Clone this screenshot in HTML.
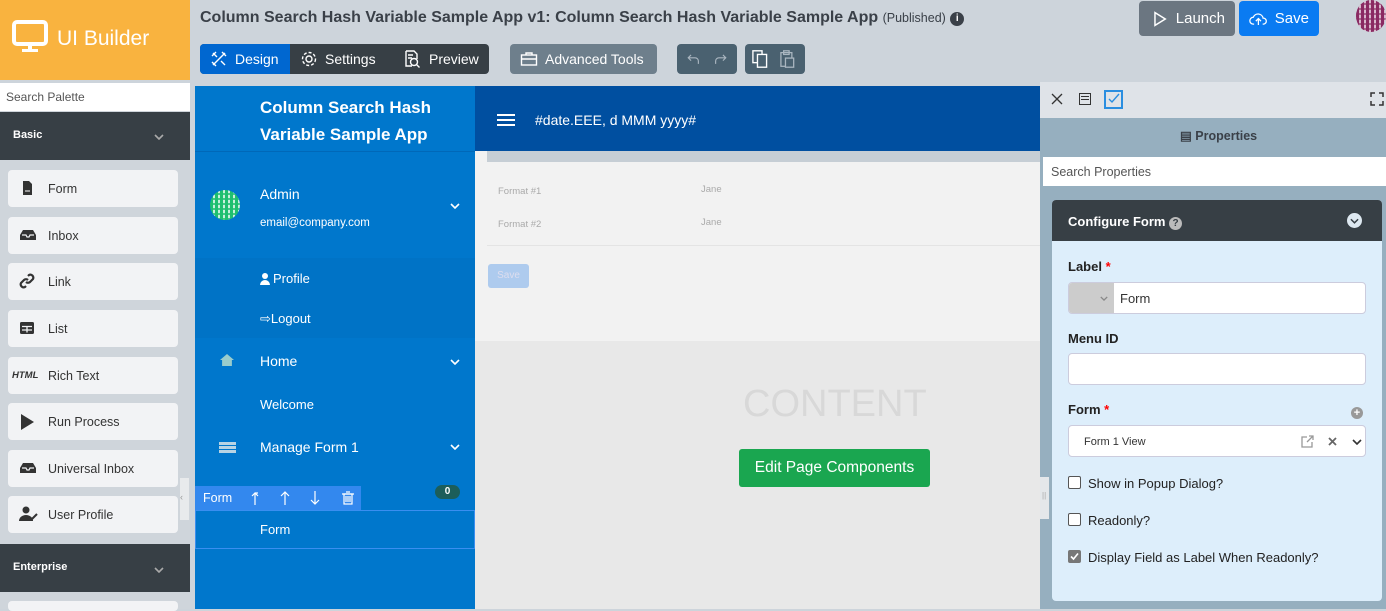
<!DOCTYPE html>
<html><head><meta charset="utf-8"><style>
*{box-sizing:border-box;margin:0;padding:0}
body{width:1386px;height:609px;overflow:hidden;background:#cdd4db;font-family:"Liberation Sans",sans-serif;position:relative;color:#333}
.abs{position:absolute}
svg{display:block}
.logo{left:0;top:0;width:190px;height:80px;background:#f9b33f;color:#fff;font-size:21px}
.title{left:200px;top:9px;font-size:16px;font-weight:bold;color:#3a4048}
.btn{position:absolute;height:30px;border-radius:4px;color:#fff;font-size:14px;display:flex;align-items:center;gap:7px;padding:0 10px}
.pal{left:0;top:83px;width:190px;height:526px;background:#cfd5db}
.search{left:0;top:83px;width:190px;height:28px;background:#fff;font-size:12px;color:#555;padding:7px 6px}
.sec{left:0;width:190px;height:48px;background:#373f45;color:#fff;font-size:11px;font-weight:bold;padding:17px 13px}
.item{position:absolute;left:8px;width:170px;height:37px;background:#f2f3f5;border-radius:4px;font-size:12.5px;color:#333;display:flex;align-items:center;padding-left:40px}
.item svg{position:absolute;left:11px;top:10px}
.side{left:195px;top:86px;width:280px;height:523px;background:#0077cc;color:#fff}
.hdr{left:475px;top:86px;width:565px;height:65px;background:#004fa0;color:#fff}
.content{left:475px;top:151px;width:565px;height:458px;background:#e8e8e8}
.menu{position:absolute;left:65px;font-size:14px}
.rp{left:1040px;top:82px;width:346px;height:527px;background:#96afbf}
.field{position:absolute;left:1068px;width:298px;height:32px;background:#fff;border:1px solid #ccd;border-radius:4px}
.lbl{position:absolute;left:1068px;font-size:13px;font-weight:bold;color:#222}
.cb{position:absolute;left:1068px;width:13px;height:13px;border:1px solid #555;border-radius:2px;background:#fff}
.cbt{position:absolute;left:1088px;font-size:13px;color:#222}
.chev{position:absolute}
</style></head><body>
<svg width="0" height="0" style="position:absolute"><defs><symbol id="chev" viewBox="0 0 10 6"><path d="M1 1l4 4 4-4" fill="none" stroke="currentColor" stroke-width="1.6"/></symbol></defs></svg>
<div class="abs logo"><svg class="abs" style="left:12px;top:20px" width="36" height="34" viewBox="0 0 36 34"><rect x="2" y="2" width="32" height="22" rx="3" fill="none" stroke="#fff" stroke-width="4"/><rect x="16" y="24" width="4" height="6" fill="#fff"/><rect x="10" y="29" width="16" height="3" fill="#fff"/></svg><span class="abs" style="left:57px;top:27px">UI Builder</span></div>
<div class="abs title">Column Search Hash Variable Sample App v1: Column Search Hash Variable Sample App <span style="font-weight:normal;font-size:12.5px">(Published)</span> <span style="display:inline-block;width:14px;height:14px;border-radius:50%;background:#3a4048;color:#fff;font-size:10px;text-align:center;line-height:14px;vertical-align:1px">i</span></div>
<div class="abs" style="left:200px;top:44px;width:289px;height:30px;background:#373f45;border-radius:4px"></div>
<div class="btn" style="left:200px;top:44px;width:90px;background:#0067d0;border-radius:4px 0 0 4px"><svg width="18" height="18" viewBox="0 0 18 18" fill="none" stroke="#fff" stroke-width="1.4"><path d="M3 15L15 3M12 2l4 4M2 12l4 4M3 3l4 4M11 11l4 4M2 6l4-4"/></svg>Design</div>
<div class="btn" style="left:290px;top:44px"><svg width="18" height="18" viewBox="0 0 18 18" fill="none" stroke="#fff" stroke-width="1.4"><circle cx="9" cy="9" r="3"/><circle cx="9" cy="9" r="6.5" stroke-dasharray="3 2"/></svg>Settings</div>
<div class="btn" style="left:392px;top:44px"><svg width="20" height="20" viewBox="0 0 20 20" fill="none" stroke="#fff" stroke-width="1.4"><path d="M4 2h8l3 3v5M4 2v15h6"/><circle cx="12" cy="13" r="3.5"/><path d="M14.5 15.5l3 3M6 6h5M6 9h4"/></svg>Preview</div>
<div class="btn" style="left:510px;top:44px;width:147px;background:#6e7f8c"><svg width="18" height="16" viewBox="0 0 18 16" fill="none" stroke="#fff" stroke-width="1.4"><rect x="1.5" y="4" width="15" height="10"/><path d="M6 4V2h6v2M1.5 8h15"/></svg>Advanced Tools</div>
<div class="btn" style="left:677px;top:44px;width:60px;background:#4a6170;gap:14px"><svg width="16" height="14" viewBox="0 0 16 14" fill="none" stroke="#aab6c0" stroke-width="1.4"><path d="M5 2L1.5 5.5 5 9M2 5.5h8a4 4 0 014 4V13"/></svg><svg width="16" height="14" viewBox="0 0 16 14" fill="none" stroke="#aab6c0" stroke-width="1.4"><path d="M11 2l3.5 3.5L11 9M14 5.5H6a4 4 0 00-4 4V13"/></svg></div>
<div class="btn" style="left:745px;top:44px;width:60px;background:#4a6170;gap:12px;padding-left:7px"><svg width="18" height="20" viewBox="0 0 18 20" fill="none" stroke="#fff" stroke-width="1.5"><rect x="1" y="1" width="10" height="13"/><rect x="6" y="5" width="10" height="14" fill="#4a6170"/></svg><svg width="16" height="20" viewBox="0 0 16 20" fill="none" stroke="#aab6c0" stroke-width="1.4"><rect x="1" y="3" width="12" height="15"/><rect x="4" y="1" width="6" height="4"/><rect x="6" y="9" width="9" height="10" fill="#4a6170"/></svg></div>
<div class="btn" style="left:1139px;top:1px;width:96px;height:35px;background:#6b7681;font-size:15px;gap:9px;padding-left:14px"><svg width="14" height="16" viewBox="0 0 14 16" fill="none" stroke="#fff" stroke-width="1.5"><path d="M2 1.5v13L12.5 8z"/></svg>Launch</div>
<div class="btn" style="left:1239px;top:1px;width:80px;height:35px;background:#0a7bf2;font-size:15px;gap:7px"><svg width="22" height="16" viewBox="0 0 22 16" fill="none" stroke="#fff" stroke-width="1.5"><path d="M6 14H5a4 4 0 010-8 6 6 0 0111.5 1A3.5 3.5 0 0117 14h-1M11 15V8M8 10.5l3-3 3 3"/></svg>Save</div>
<div class="abs" style="left:1356px;top:0;width:30px;height:32px;border-radius:50%;background:repeating-linear-gradient(90deg,#8a2a62 0 3px,#d8b8cc 3px 5px),#8a2a62;overflow:hidden"><div style="width:30px;height:32px;background:repeating-linear-gradient(#0000 0 3px,#8a2a6299 3px 5px)"></div></div>

<div class="abs pal"></div>
<div class="abs search">Search Palette</div>
<div class="abs sec" style="top:112px">Basic<svg class="chev" style="right:26px;top:22px;color:#aaa" width="10" height="6"><use href="#chev"/></svg></div>
<div class="item" style="top:170px"><svg width="16" height="16" viewBox="0 0 16 16"><path d="M4 1h6l3 3v11H4z" fill="#333"/><path d="M6 11h5" stroke="#fff"/></svg>Form</div>
<div class="item" style="top:217px"><svg width="18" height="16" viewBox="0 0 18 16"><path d="M1 8l3-5h10l3 5v5H1z" fill="#333"/><path d="M3 8h4l1 2h2l1-2h4" fill="none" stroke="#f2f3f5" stroke-width="1.2"/></svg>Inbox</div>
<div class="item" style="top:263px"><svg width="16" height="16" viewBox="0 0 16 16" fill="none" stroke="#333" stroke-width="2.2"><path d="M7 9a3 3 0 004 0l3-3a3 3 0 00-4-4L9 3M9 7a3 3 0 00-4 0L2 10a3 3 0 004 4l1-1"/></svg>Link</div>
<div class="item" style="top:310px"><svg width="16" height="16" viewBox="0 0 16 16"><rect x="1" y="2" width="14" height="12" rx="1.5" fill="#333"/><path d="M3 6.5h10M8 6.5v6M3 10h10" stroke="#f2f3f5" stroke-width="1.3"/></svg>List</div>
<div class="item" style="top:357px"><b class="abs" style="left:4px;top:13px;font-size:9.5px;font-style:italic">HTML</b>Rich Text</div>
<div class="item" style="top:403px"><svg width="16" height="18" viewBox="0 0 16 18"><path d="M2 1v16l13-8z" fill="#333"/></svg>Run Process</div>
<div class="item" style="top:450px"><svg width="18" height="16" viewBox="0 0 18 16"><path d="M1 8l3-5h10l3 5v5H1z" fill="#333"/><path d="M3 8h4l1 2h2l1-2h4" fill="none" stroke="#f2f3f5" stroke-width="1.2"/></svg>Universal Inbox</div>
<div class="item" style="top:496px"><svg width="20" height="16" viewBox="0 0 20 16"><circle cx="7" cy="4" r="3.5" fill="#333"/><path d="M0 15a7 6 0 0114 0z" fill="#333"/><path d="M12 14l6-6" stroke="#333" stroke-width="2"/></svg>User Profile</div>
<div class="abs sec" style="top:544px;height:48px">Enterprise<svg class="chev" style="right:26px;top:23px;color:#aaa" width="10" height="6"><use href="#chev"/></svg></div>
<div class="abs" style="left:8px;top:601px;width:170px;height:10px;background:#f2f3f5;border-radius:4px"></div>
<div class="abs" style="left:180px;top:478px;width:9px;height:42px;background:#e8eaec;font-size:9px;color:#999;padding-top:14px">‹</div>

<div class="abs side">
<div class="menu" style="top:8px;font-size:17px;font-weight:bold;line-height:27px">Column Search Hash<br>Variable Sample App</div>
<div class="abs" style="left:0;top:65px;width:280px;height:1px;background:#0068b8"></div>
<div class="abs" style="left:15px;top:104px;width:30px;height:30px;border-radius:50%;background:repeating-linear-gradient(90deg,#1fbf70 0 3px,#c8f0dc 3px 5px);overflow:hidden"><div style="width:30px;height:30px;background:repeating-linear-gradient(#0000 0 3px,#1fbf70cc 3px 5px)"></div></div>
<div class="menu" style="top:100px">Admin</div>
<div class="menu" style="top:131px;font-size:11.5px">email@company.com</div>
<svg class="chev" style="left:255px;top:117px;color:#fff" width="10" height="6"><use href="#chev"/></svg>
<div class="abs" style="left:0;top:172px;width:280px;height:80px;background:#0073c6"></div>
<div class="menu" style="top:185px;font-size:13px;display:flex;gap:3px;align-items:center"><svg width="10" height="12" viewBox="0 0 10 12"><circle cx="5" cy="3" r="3" fill="#fff"/><path d="M0 12a5 5 0 0110 0z" fill="#fff"/></svg>Profile</div>
<div class="menu" style="top:225px;font-size:13px">⇨Logout</div>
<div class="abs" style="left:25px;top:268px;width:14px;height:12px;background:#9cc;clip-path:polygon(50% 0,100% 50%,85% 50%,85% 100%,15% 100%,15% 50%,0 50%)"></div>
<div class="menu" style="top:267px">Home</div>
<svg class="chev" style="left:255px;top:273px;color:#fff" width="10" height="6"><use href="#chev"/></svg>
<div class="menu" style="top:311px;font-size:13px">Welcome</div>
<div class="abs" style="left:24px;top:356px;width:17px;height:12px;background:repeating-linear-gradient(#b8d4e4 0 3px,#0077cc 3px 4px)"></div>
<div class="menu" style="top:353px">Manage Form 1</div>
<svg class="chev" style="left:255px;top:358px;color:#fff" width="10" height="6"><use href="#chev"/></svg>
<div class="abs" style="left:240px;top:399px;width:25px;height:14px;border-radius:7px;background:#1c5e5a;font-size:10px;font-weight:bold;text-align:center;line-height:14px">0</div>
<div class="abs" style="left:0;top:400px;width:166px;height:24px;background:#3388ee;font-size:12.5px;padding:5px 8px">Form</div>
<svg class="abs" style="left:54px;top:404px" width="110" height="16" viewBox="0 0 110 16" fill="none" stroke="#fff" stroke-width="1.2"><path d="M6 15V3M3 6l3-3 3 3M6 3h3"/><path d="M36 15V2M32 6l4-4 4 4"/><path d="M66 1v13M62 10l4 4 4-4"/><rect x="95" y="4" width="8" height="10"/><path d="M93 4h12M97 2h4M97 6v6M99 6v6M101 6v6"/></svg>
<div class="abs" style="left:0;top:424px;width:280px;height:39px;border:1px solid #3a8ef0"></div>
<div class="menu" style="top:436px;font-size:13px">Form</div>
</div>

<div class="abs hdr"><div class="abs" style="left:22px;top:28px;width:18px;height:2px;background:#fff;box-shadow:0 5px #fff,0 10px #fff"></div><span class="abs" style="left:60px;top:26px;font-size:14px">#date.EEE, d MMM yyyy#</span></div>
<div class="abs content"></div>
<div class="abs" style="left:475px;top:151px;width:565px;height:190px;background:#f2f2f2"></div>
<div class="abs" style="left:487px;top:151px;width:553px;height:11px;background:#c6ced5"></div>
<div class="abs" style="left:487px;top:162px;width:553px;height:84px;border-bottom:1px solid #e4e4e4;font-size:9.5px;color:#aaa"><span class="abs" style="left:11px;top:24px">Format #1</span><span class="abs" style="left:214px;top:22px">Jane</span><span class="abs" style="left:11px;top:57px">Format #2</span><span class="abs" style="left:214px;top:55px">Jane</span></div>
<div class="abs" style="left:488px;top:264px;width:41px;height:24px;background:#aecbee;border-radius:3px;color:#dde;font-size:10px;text-align:center;line-height:24px">Save</div>
<div class="abs" style="left:743px;top:383px;font-size:38px;color:#d8d8d8">CONTENT</div>
<div class="abs" style="left:739px;top:449px;width:191px;height:38px;background:#1aa650;border-radius:3px;color:#fff;font-size:15.5px;text-align:center;line-height:38px">Edit Page Components</div>

<div class="abs rp"></div>
<div class="abs" style="left:1040px;top:82px;width:346px;height:36px;background:#dfe3e8"></div>
<svg class="abs" style="left:1051px;top:93px" width="12" height="12" viewBox="0 0 12 12" stroke="#333" stroke-width="1.3"><path d="M1 1l10 10M11 1L1 11"/></svg>
<div class="abs" style="left:1079px;top:93px;width:12px;height:12px;border:1.5px solid #333"><div style="margin:2px 1px;height:4px;border-top:1.5px solid #333;border-bottom:1.5px solid #333"></div></div>
<div class="abs" style="left:1104px;top:90px;width:19px;height:19px;border:2px solid #2a8ee0"><svg width="15" height="15" viewBox="0 0 15 15" fill="none" stroke="#2a8ee0" stroke-width="1.4"><path d="M3 7l3 3 7-8"/></svg></div>
<svg class="abs" style="left:1370px;top:92px" width="14" height="14" viewBox="0 0 14 14" fill="none" stroke="#333" stroke-width="1.5"><path d="M1 5V1h4M9 1h4v4M13 9v4H9M5 13H1V9"/></svg>
<div class="abs" style="left:1180px;top:128px;font-size:12.5px;font-weight:bold;color:#3a4048">▤ Properties</div>
<div class="abs" style="left:1043px;top:157px;width:343px;height:29px;background:#fff;font-size:12.5px;color:#555;padding:8px 8px">Search Properties</div>
<div class="abs" style="left:1052px;top:200px;width:330px;height:401px;background:#ddeefb;border-radius:4px"></div>
<div class="abs" style="left:1052px;top:200px;width:330px;height:41px;background:#373f45;border-radius:4px 4px 0 0;color:#fff;font-size:13px;font-weight:bold;padding:14px 16px">Configure Form <span style="display:inline-block;width:13px;height:13px;border-radius:50%;background:#bbb;color:#373f45;font-size:10px;text-align:center;line-height:13px">?</span><span class="abs" style="right:20px;top:13px;width:15px;height:15px;border-radius:50%;background:#dde8f0;color:#373f45"><svg class="chev" style="left:3px;top:5px;color:#373f45" width="9" height="6"><use href="#chev"/></svg></span></div>
<div class="lbl" style="top:259px">Label <span style="color:red">*</span></div>
<div class="field" style="top:282px;overflow:hidden"><div class="abs" style="left:0;top:0;width:45px;height:32px;background:#ccc"></div><svg class="chev" style="left:31px;top:13px;color:#888" width="8" height="5"><use href="#chev"/></svg><span class="abs" style="left:51px;top:8px;font-size:13px">Form</span></div>
<div class="lbl" style="top:331px">Menu ID</div>
<div class="field" style="top:353px"></div>
<div class="lbl" style="top:402px">Form <span style="color:red">*</span></div>
<div class="abs" style="left:1351px;top:407px;width:12px;height:12px;border-radius:50%;background:#999;color:#fff;font-size:11px;line-height:12px;text-align:center;font-weight:bold">+</div>
<div class="field" style="top:425px"><span class="abs" style="left:15px;top:10px;font-size:11px">Form 1 View</span><svg class="abs" style="left:232px;top:9px" width="13" height="13" viewBox="0 0 13 13" fill="none" stroke="#999" stroke-width="1.3"><path d="M6 2H1v10h10V7M8 1h4v4M12 1L6 7"/></svg><svg class="abs" style="left:259px;top:11px" width="9" height="9" viewBox="0 0 9 9" stroke="#666" stroke-width="1.8"><path d="M1 1l7 7M8 1L1 8"/></svg><svg class="chev" style="left:283px;top:13px;color:#333" width="10" height="6"><use href="#chev"/></svg></div>
<div class="cb" style="top:476px"></div><div class="cbt" style="top:476px">Show in Popup Dialog?</div>
<div class="cb" style="top:513px"></div><div class="cbt" style="top:513px">Readonly?</div>
<div class="cb" style="top:550px;background:#777;border-color:#777"><svg width="11" height="11" viewBox="0 0 11 11" fill="none" stroke="#fff" stroke-width="1.6"><path d="M2 5.5l2.5 2.5L9 2.5"/></svg></div><div class="cbt" style="top:550px">Display Field as Label When Readonly?</div>
<div class="abs" style="left:1040px;top:477px;width:9px;height:42px;background:#e4e7ea;font-size:8px;color:#aaa;padding-top:14px;padding-left:2px">||</div>
</body></html>
